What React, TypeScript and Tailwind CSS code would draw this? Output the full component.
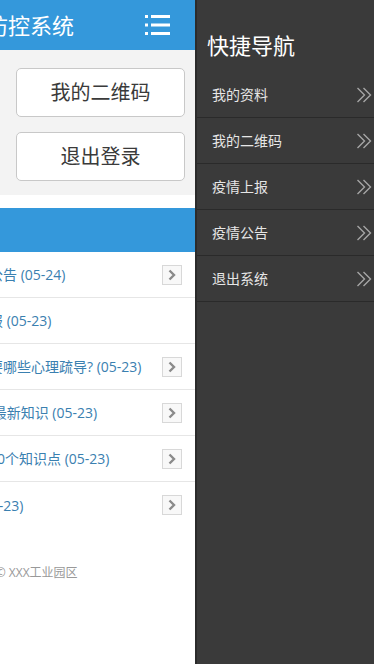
const notices = [
  { title: "关于园区疫情防控工作的公告", date: "05-24", arrow: true },
  { title: "园区返岗复工人员健康申报", date: "05-23", arrow: false },
  { title: "疫情防控期间园区员工需要哪些心理疏导?", date: "05-23", arrow: true },
  { title: "新型冠状病毒肺炎 防护的最新知识", date: "05-23", arrow: true },
  { title: "疫情防控期间必须知道的10个知识点", date: "05-23", arrow: true },
  { title: "园区复工复产防疫指南", date: "05-23", arrow: true },
];

const menu = ["我的资料", "我的二维码", "疫情上报", "疫情公告", "退出系统"];

function MenuIcon() {
  return (
    <svg width="25" height="20" viewBox="0 0 25 20" fill="white">
      <rect x="0" y="0" width="3" height="3" />
      <rect x="6" y="0" width="19" height="3" />
      <rect x="0" y="8.5" width="3" height="3" />
      <rect x="6" y="8.5" width="19" height="3" />
      <rect x="0" y="17" width="3" height="3" />
      <rect x="6" y="17" width="19" height="3" />
    </svg>
  );
}

function Chevron() {
  return (
    <svg width="8" height="12" viewBox="0 0 8 12" fill="none" stroke="#8a8a8a" strokeWidth="2.4">
      <path d="M1.5 1.5 6 6l-4.5 4.5" />
    </svg>
  );
}

function DoubleChevron() {
  return (
    <svg width="16" height="16" viewBox="0 0 16 16" fill="none" stroke="#a5a5a5" strokeWidth="1.4">
      <path d="M1.5 1 8.5 8l-7 7" />
      <path d="M7.5 1l7 7-7 7" />
    </svg>
  );
}

export default function App() {
  return (
    <div
      className="flex w-[374px] h-screen overflow-hidden bg-white"
      style={{ fontFamily: '"Open Sans", "Noto Sans CJK SC", sans-serif' }}
    >
      {/* page pushed aside by the drawer */}
      <div className="w-[195px] shrink-0 overflow-hidden">
        <div className="w-[374px] ml-[-179px]">
          <header className="h-[50px] bg-[#3498db] grid grid-cols-[60px_1fr_60px] items-center">
            <div />
            <h1 className="text-center text-[22px] text-white leading-none">疫情防控系统</h1>
            <div className="flex justify-end pr-[25px]">
              <MenuIcon />
            </div>
          </header>

          <div className="bg-[#f3f3f3] pt-[18px] pb-[14px] flex">
            <div className="flex-1 flex items-center gap-3 pl-[12px]">
              <div className="w-[56px] h-[56px] rounded-full bg-[#dcdcdc]" />
              <div className="text-[15px] text-[#333]">张三</div>
            </div>
            <div className="w-[169px] mr-[10px] flex flex-col gap-[15px]">
              <button className="h-[49px] bg-white border border-[#c8c8c8] rounded-[5px] text-[20px] text-[#3a3a3a]">
                我的二维码
              </button>
              <button className="h-[49px] bg-white border border-[#c8c8c8] rounded-[5px] text-[20px] text-[#3a3a3a]">
                退出登录
              </button>
            </div>
          </div>

          <div className="h-[13px]" />
          <div className="h-[44px] bg-[#3498db] flex items-center pl-[12px] text-[16px] text-white">疫情公告</div>

          <ul>
            {notices.map((n, i) => (
              <li
                key={i}
                className={`h-[46px] flex items-center pl-[14px] pr-[13px] ${i < notices.length - 1 ? "border-b border-[#e6e6e6]" : ""}`}
              >
                <span className="flex-1 whitespace-nowrap overflow-hidden text-[14px] text-[#3a80b0]">
                  {n.title} ({n.date})
                </span>
                {n.arrow && (
                  <span className="w-[20px] h-[20px] border border-[#d8d8d8] bg-[#f8f8f8] flex items-center justify-center">
                    <Chevron />
                  </span>
                )}
              </li>
            ))}
          </ul>

          <p className="mt-[36px] text-center text-[12px] text-[#999]">Copyright © XXX工业园区</p>
        </div>
      </div>

      {/* drawer */}
      <aside className="flex-1 bg-[#3a3a3a] border-l-2 border-[#2b2b2b]">
        <div className="h-[72px] flex items-center pt-[18px] pl-[10px] text-[22px] text-white">快捷导航</div>
        <ul>
          {menu.map((m) => (
            <li
              key={m}
              className="h-[46px] flex items-center justify-between pl-[15px] pr-[2px] border-b border-[#2a2a2a] text-[14px] text-[#e6e6e6]"
            >
              <span>{m}</span>
              <DoubleChevron />
            </li>
          ))}
        </ul>
      </aside>
    </div>
  );
}
